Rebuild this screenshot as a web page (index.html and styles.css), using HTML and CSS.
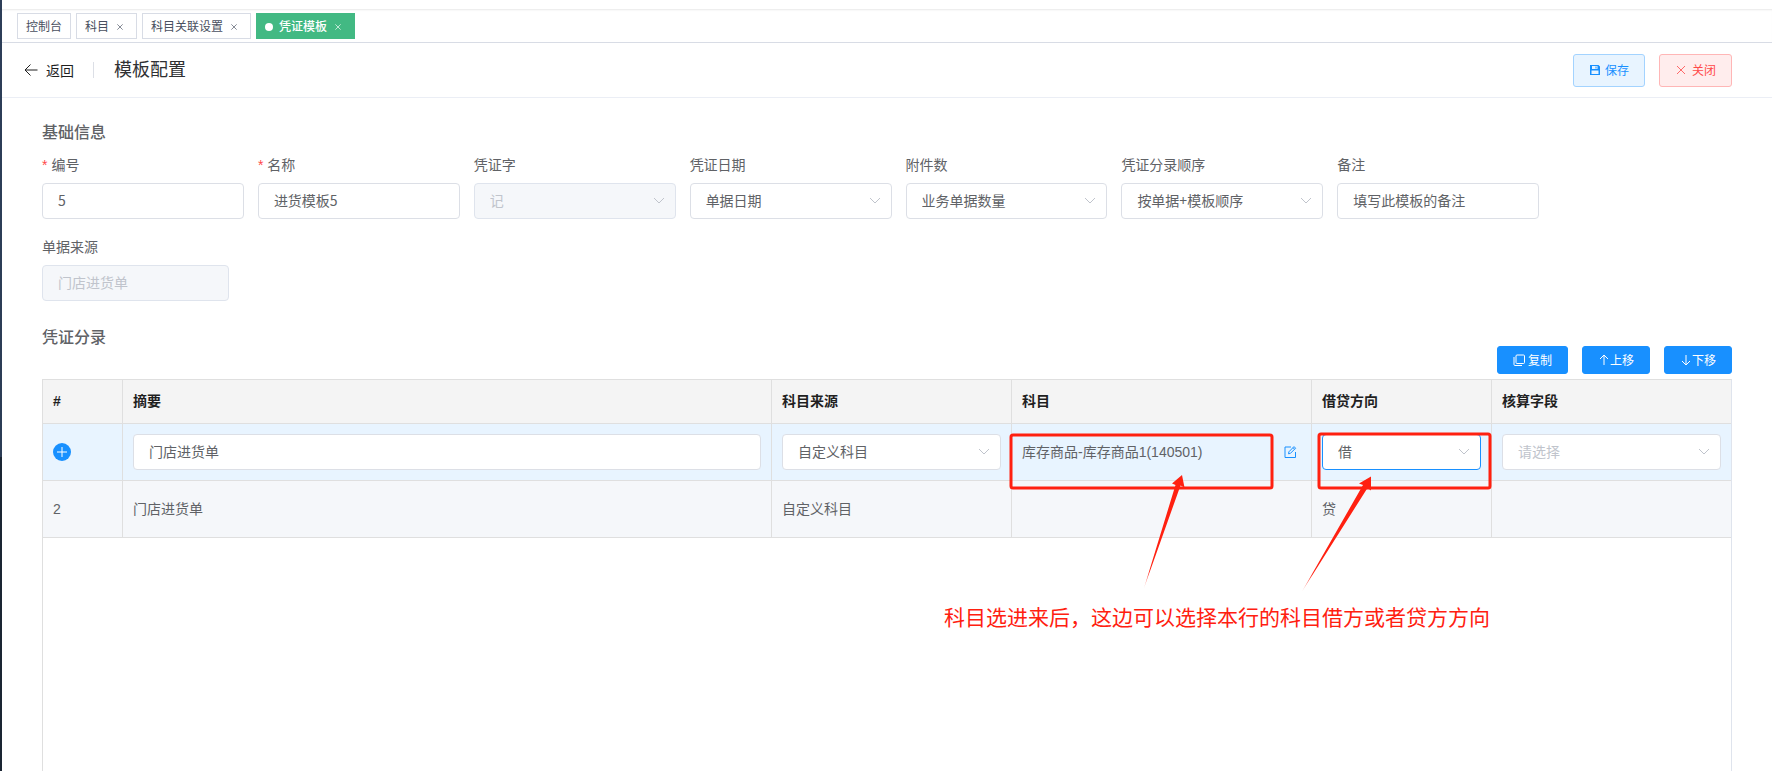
FILE: index.html
```html
<!DOCTYPE html>
<html lang="zh-CN">
<head>
    <meta charset="UTF-8">
    <meta name="viewport" content="width=device-width, initial-scale=1.0">
    <title>模板配置</title>

    <link rel="stylesheet" href="styles.css">
</head>
<body>

<svg class="sprite" aria-hidden="true">
    <symbol id="icon-close" viewBox="0 0 12 12"><path d="M2 2l8 8M10 2l-8 8"/></symbol>
    <symbol id="icon-chevron" viewBox="0 0 12 8"><path d="M1 1l5 5 5-5"/></symbol>
</svg>

<nav class="tabs">
    <a class="tab" href="#">控制台</a>
    <a class="tab" href="#">科目<svg class="tab-close"><use href="#icon-close"/></svg></a>
    <a class="tab" href="#">科目关联设置<svg class="tab-close"><use href="#icon-close"/></svg></a>
    <a class="tab active" href="#">凭证模板<svg class="tab-close"><use href="#icon-close"/></svg></a>
</nav>

<header class="page-header">
    <button class="back" type="button">
        <svg width="14" height="14" viewBox="0 0 14 14"><path d="M13.5 7H1M6.500 1.500L1 7l5.500 5.500"/></svg>
        返回
    </button>
    <h1>模板配置</h1>
    <div class="header-actions">
        <button class="btn btn-save" type="button">
            <svg width="12" height="12" viewBox="0 0 12 12"><path class="solid" fill-rule="evenodd" d="M1 1h8.500L11 2.500V11H1zM3 2v3h5.500V2zM2.500 6.500V10h7V6.500zM6.500 2.500h1v2h-1z"/></svg>
            保存
        </button>
        <button class="btn btn-close" type="button">
            <svg width="12" height="12"><use href="#icon-close"/></svg>
            关闭
        </button>
    </div>
</header>

<main>
    <h2>基础信息</h2>
    <form class="base-form">
        <div class="field">
            <label class="required" for="code">编号</label>
            <input type="text" id="code" value="5">
        </div>
        <div class="field">
            <label class="required" for="name">名称</label>
            <input type="text" id="name" value="进货模板5">
        </div>
        <div class="field">
            <label for="word">凭证字</label>
            <div class="select-box">
                <select id="word" disabled><option>记</option></select>
                <svg class="chevron"><use href="#icon-chevron"/></svg>
            </div>
        </div>
        <div class="field">
            <label for="date">凭证日期</label>
            <div class="select-box">
                <select id="date"><option>单据日期</option></select>
                <svg class="chevron"><use href="#icon-chevron"/></svg>
            </div>
        </div>
        <div class="field">
            <label for="attach">附件数</label>
            <div class="select-box">
                <select id="attach"><option>业务单据数量</option></select>
                <svg class="chevron"><use href="#icon-chevron"/></svg>
            </div>
        </div>
        <div class="field">
            <label for="order">凭证分录顺序</label>
            <div class="select-box">
                <select id="order"><option>按单据+模板顺序</option></select>
                <svg class="chevron"><use href="#icon-chevron"/></svg>
            </div>
        </div>
        <div class="field">
            <label for="remark">备注</label>
            <input type="text" id="remark" value="填写此模板的备注">
        </div>
        <div class="field source">
            <label for="source">单据来源</label>
            <input type="text" id="source" value="门店进货单" disabled>
        </div>
    </form>

    <div class="entries-head">
        <h2>凭证分录</h2>
        <div class="entries-actions">
            <button class="btn btn-primary copy" type="button">
                <svg width="12" height="12" viewBox="0 0 12 12"><path d="M4 1h6.500a1 1 0 0 1 1 1v6.500a1 1 0 0 1-1 1H4a1 1 0 0 1-1-1V2a1 1 0 0 1 1-1zM1 3v7.500a1 1 0 0 0 1 1h7"/></svg>
                复制
            </button>
            <button class="btn btn-primary" type="button">
                <svg width="12" height="12" viewBox="0 0 12 12"><path d="M6 11V1.500M2 5l4-4 4 4"/></svg>
                上移
            </button>
            <button class="btn btn-primary" type="button">
                <svg width="12" height="12" viewBox="0 0 12 12"><path d="M6 1v9.500M2 7l4 4 4-4"/></svg>
                下移
            </button>
        </div>
    </div>

    <div class="entries">
        <table>
            <colgroup>
                <col class="col-index">
                <col>
                <col class="col-source">
                <col class="col-subject">
                <col class="col-direction">
                <col class="col-field">
            </colgroup>
            <thead>
                <tr>
                    <th>#</th>
                    <th>摘要</th>
                    <th>科目来源</th>
                    <th>科目</th>
                    <th>借贷方向</th>
                    <th>核算字段</th>
                </tr>
            </thead>
            <tbody>
                <tr class="current">
                    <td>
                        <button class="icon-btn" type="button" aria-label="新增">
                            <svg width="18" height="18" viewBox="0 0 18 18"><circle cx="9" cy="9" r="9"/><path d="M9 4v10M4 9h10"/></svg>
                        </button>
                    </td>
                    <td><input type="text" aria-label="摘要" value="门店进货单"></td>
                    <td>
                        <div class="select-box">
                            <select aria-label="科目来源"><option>自定义科目</option></select>
                            <svg class="chevron"><use href="#icon-chevron"/></svg>
                        </div>
                    </td>
                    <td>
                        <div class="subject">
                            <span>库存商品-库存商品1(140501)</span>
                            <button class="icon-btn edit" type="button" aria-label="编辑">
                                <svg width="14" height="14" viewBox="0 0 14 14"><path d="M8 2H2v10.500h10.500V7M5.500 8.800l.4-2L11 1.600l1.600 1.600-5.200 5.200zM10 2.700l1.500 1.500"/></svg>
                            </button>
                        </div>
                    </td>
                    <td>
                        <div class="select-box">
                            <select class="focused" aria-label="借贷方向"><option>借</option><option>贷</option></select>
                            <svg class="chevron"><use href="#icon-chevron"/></svg>
                        </div>
                    </td>
                    <td>
                        <div class="select-box">
                            <select class="empty" aria-label="核算字段"><option>请选择</option></select>
                            <svg class="chevron"><use href="#icon-chevron"/></svg>
                        </div>
                    </td>
                </tr>
                <tr>
                    <td>2</td>
                    <td>门店进货单</td>
                    <td>自定义科目</td>
                    <td></td>
                    <td>贷</td>
                    <td></td>
                </tr>
            </tbody>
        </table>

        <!-- callouts over the table, anchored to its right edge -->
        <svg class="marks" width="500" height="180" viewBox="0 0 500 180">
            <defs>
                <linearGradient id="fade" x1="0" y1="1" x2="0" y2="0">
                    <stop offset="0" stop-color="#ff2010" stop-opacity="0.3"/>
                    <stop offset="0.15" stop-color="#ff2010"/>
                </linearGradient>
            </defs>
            <rect x="11" y="10" width="261" height="53" rx="2"/>
            <rect x="319" y="9" width="171" height="54" rx="2"/>
            <path d="M144 163L175.500 60 172 58.500 182 50l2.500 12.500-4-2z"/>
            <path d="M302 166.500L363 60l-4-1.500L371 51.500V65.500l-3.500-2.500z"/>
        </svg>
        <p class="note">科目选进来后，这边可以选择本行的科目借方或者贷方方向</p>
    </div>
</main>

</body>
</html>
```

FILE: styles.css
```css
* {
    box-sizing: border-box;
}

body {
    margin: 0;
    min-height: 100vh;
    display: flex;
    flex-direction: column;
    padding: 9px 0 0 2px;
    background: linear-gradient(#2d3e58, #2b3c55 457px, #1a2533 457px) left / 2px 100% no-repeat, #fff;
    color: #606266;
    font-family: "Liberation Sans", "Noto Sans CJK SC", sans-serif;
    font-size: 14px;
    line-height: 24px;
}

button, input, select {
    font-family: "Noto Sans CJK SC", sans-serif;
    font-size: 14px;
    color: #606266;
}
button {
    cursor: pointer;
}

svg {
    fill: none;
    stroke: currentColor;
    flex-shrink: 0;
}
.sprite {
    display: none;
}
.solid {
    fill: currentColor;
    stroke: none;
}

/* tabs */
.tabs {
    display: flex;
    gap: 5px;
    padding: 4px 15px 3px;
    border-bottom: 1px solid #d8dce5;
    box-shadow: inset 0 2px 2px -1px #e8e8e8;
}
.tab {
    display: flex;
    align-items: center;
    height: 26px;
    padding: 1px 8px 0;
    border: 1px solid #d8dce5;
    color: #495060;
    font-size: 12px;
    text-decoration: none;
}
.tab.active {
    background-color: #42b983;
    border-color: #42b983;
    color: #fff;
    font-weight: 500;
}
.tab.active::before {
    content: "";
    width: 8px;
    height: 8px;
    margin-right: 6px;
    border-radius: 50%;
    background-color: #fff;
}
.tab-close {
    width: 8px;
    height: 8px;
    margin: 1px 4px 0 7px;
}

/* header */
.page-header {
    display: flex;
    align-items: center;
    height: 55px;
    padding: 0 40px 0 22px;
    border-bottom: 1px solid #ebeef5;
}
.back {
    display: flex;
    align-items: center;
    gap: 8px;
    padding: 0;
    border: none;
    background: none;
    color: #1f1f1f;
    line-height: 20px;
}
h1 {
    margin: 0 0 0 19px;
    padding-left: 21px;
    background: linear-gradient(#dcdfe6, #dcdfe6) left / 1px 16px no-repeat;
    color: #303133;
    font-size: 18px;
    font-weight: 400;
}
.header-actions {
    display: flex;
    gap: 14px;
    margin-left: auto;
}

.btn {
    display: flex;
    align-items: center;
    justify-content: center;
    padding: 0 15px;
    border: 1px solid;
    border-radius: 3px;
    font-size: 12px;
    line-height: 16px;
}
.btn-save, .btn-close {
    gap: 4px;
    height: 33px;
}
.btn-save {
    background-color: #e8f4ff;
    border-color: #a3d3ff;
    color: #1890ff;
}
.btn-close {
    gap: 5px;
    background-color: #ffeded;
    border-color: #ffb6b6;
    color: #ff4949;
}
.btn-close svg {
    opacity: 0.8;
}
.btn-primary {
    height: 28px;
    background-color: #1890ff;
    border-color: #1890ff;
    color: #fff;
}
.copy {
    gap: 3px;
}

/* form */
main {
    flex: 1;
    display: flex;
    flex-direction: column;
    padding: 22px 40px 0;
}
h2 {
    margin: 0;
    font-size: 16px;
    font-weight: 500;
    line-height: 26px;
}
.base-form {
    display: grid;
    grid-template-columns: repeat(8, 1fr);
    gap: 16px 14px;
    margin: 7px -23px 24px 0;
}
.field {
    display: flex;
    flex-direction: column;
    gap: 6px;
}
.source {
    grid-column: 1;
    padding-right: 15px;
}
.required::before {
    content: "*";
    margin-right: 4px;
    color: #ff4949;
}

input, select {
    width: 100%;
    height: 36px;
    padding: 0 15px 2px;
    border: 1px solid #dcdfe6;
    border-radius: 4px;
    background-color: #fff;
    outline: none;
    appearance: none;
}
input:disabled, select:disabled {
    background-color: #f5f7fa;
    border-color: #dfe4ed;
    color: #c0c4cc;
    opacity: 1;
}
.focused {
    border-color: #1890ff;
}
.empty {
    color: #c0c4cc;
}
.select-box {
    display: grid;
    align-items: center;
}
.select-box > * {
    grid-area: 1 / 1;
}
.chevron {
    width: 12px;
    height: 8px;
    margin-right: 11px;
    justify-self: end;
    color: #c0c4cc;
    pointer-events: none;
}

/* entries */
.entries-head {
    display: flex;
    justify-content: space-between;
    height: 54px;
    padding-bottom: 5px;
}
.entries-actions {
    display: flex;
    align-items: flex-end;
    gap: 14px;
}
.entries {
    position: relative;
    flex: 1;
    border: 1px solid #dfdfdf;
    border-right-color: #dfe4ed;
    border-bottom: none;
}
table {
    width: 100%;
    table-layout: fixed;
    border-spacing: 0;
}
.col-index {
    width: 80px;
}
.col-source {
    width: 240px;
}
.col-subject {
    width: 300px;
}
.col-direction {
    width: 180px;
}
.col-field {
    width: 239px;
}
th, td {
    padding: 0 10px;
    border-right: 1px solid #dfdfdf;
    border-bottom: 1px solid #dfdfdf;
    text-align: left;
}
th:last-child, td:last-child {
    border-right: none;
}
th {
    height: 44px;
    padding-bottom: 2px;
    background-color: #f4f4f4;
    color: #1f1f1f;
    font-weight: 600;
}
td {
    height: 57px;
    background-color: #f5f7fa;
}
.current td {
    background-color: #e8f4ff;
}
.icon-btn {
    display: flex;
    padding: 0;
    border: none;
    background: none;
    color: #fff;
}
.icon-btn circle {
    fill: #1890ff;
    stroke: none;
}
.subject {
    display: flex;
    align-items: center;
    justify-content: space-between;
}
.subject .edit {
    margin-right: 4px;
    color: #1890ff;
}

.marks {
    position: absolute;
    top: 45px;
    right: 231px;
    pointer-events: none;
}
.marks rect {
    stroke: #ff2010;
    stroke-width: 3;
}
.marks path {
    fill: url(#fade);
    stroke: none;
}
.note {
    position: absolute;
    top: 226px;
    right: 241px;
    margin: 0;
    color: #ff2010;
    font-size: 21px;
    white-space: nowrap;
}
```
